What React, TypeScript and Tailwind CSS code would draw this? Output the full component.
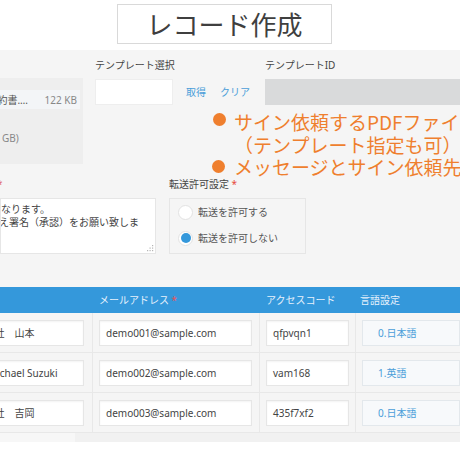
import React from "react";

// ─── Data ───────────────────────────────────────────────────────

const ROWS = [
  { name: "A社　山本", email: "demo001@sample.com", code: "qfpvqn1", lang: "0.日本語" },
  { name: "Michael Suzuki", email: "demo002@sample.com", code: "vam168", lang: "1.英語" },
  { name: "A社　吉岡", email: "demo003@sample.com", code: "435f7xf2", lang: "0.日本語" },
];

const FONT = "font-['Noto_Sans','Noto_Sans_CJK_JP',sans-serif]";

// ─── Pieces ─────────────────────────────────────────────────────

function Input({ className = "", children }: { className?: string; children?: React.ReactNode }) {
  return (
    <div
      className={`h-[26px] bg-white border border-[#e6e6e6] shadow-[inset_0_1px_2px_rgba(0,0,0,0.05)] flex items-center overflow-hidden whitespace-nowrap text-[#444] ${className}`}
    >
      {children}
    </div>
  );
}

function Radio({ checked, label }: { checked?: boolean; label: string }) {
  return (
    <div className="flex items-center h-[26px]">
      <span className="w-[15px] h-[15px] rounded-full bg-white border border-[#e2e2e2] flex items-center justify-center">
        {checked && <span className="w-[10px] h-[10px] rounded-full bg-[#3498db]" />}
      </span>
      <span className="ml-[5px] text-[#555]">{label}</span>
    </div>
  );
}

// ─── App ────────────────────────────────────────────────────────

export default function App() {
  return (
    <div className={`relative w-[460px] h-[460px] overflow-hidden bg-white text-[10px] leading-[14px] ${FONT}`}>
      {/* Title */}
      <div className="h-[50px] pt-[4px] pl-[117px]">
        <div className="w-[215px] h-[40px] border border-[#d9d9d9] flex items-center justify-center text-[26px] text-[#3f3f3f] font-['Noto_Sans_CJK_JP',sans-serif] leading-none">
          レコード作成
        </div>
      </div>

      {/* Form area */}
      <div className="h-[383px] bg-[#f5f5f5] flex flex-col">
        {/* Top row */}
        <div className="flex h-[114px]">
          <div className="mt-[28px] w-[83px] h-[86px] bg-[#eeeeee] flex flex-col">
            <div className="mt-[12px] h-[19px] w-[80px] bg-[#f3f5f7] flex items-center">
              <div className="w-[28px] overflow-hidden flex justify-end whitespace-nowrap text-[#555]">
                契約書.…
              </div>
              <div className="ml-auto mr-[3px] text-[#888]">122 KB</div>
            </div>
            <div className="mt-[22px] pl-[2px] text-[#888]">GB)</div>
          </div>

          <div className="ml-[12px] w-[170px] flex flex-col">
            <div className="mt-[8px] text-[#444]">テンプレート選択</div>
            <div className="mt-[7px] flex items-center">
              <div className="w-[78px] h-[26px] bg-white border border-[#eeeeee]" />
              <span className="ml-[13px] text-[#4a9ed9]">取得</span>
              <span className="ml-[14px] text-[#4a9ed9]">クリア</span>
            </div>
          </div>

          <div className="flex-1 flex flex-col">
            <div className="mt-[8px] text-[#444]">テンプレートID</div>
            <div className="mt-[7px] h-[26px] bg-[#d9dadb]" />
          </div>
        </div>

        {/* Message + transfer row */}
        <div className="flex mt-[13px]">
          <div className="w-[156px] flex flex-col">
            <div className="-ml-[3px] text-[#e06060]">*</div>
            <div className="relative mt-[7px] h-[56px] bg-white border border-[#e6e6e6] overflow-hidden text-[#444] leading-[13px] pt-[4px] whitespace-nowrap">
              <div>なります。</div>
              <div className="-ml-[2px]">え署名（承認）をお願い致しま</div>
              <svg className="absolute right-[1px] bottom-[1px]" width="7" height="7" viewBox="0 0 7 7">
                <g fill="#b5b5b5">
                  <rect x="5" y="0" width="1.2" height="1.2" />
                  <rect x="2.5" y="2.5" width="1.2" height="1.2" />
                  <rect x="5" y="2.5" width="1.2" height="1.2" />
                  <rect x="0" y="5" width="1.2" height="1.2" />
                  <rect x="2.5" y="5" width="1.2" height="1.2" />
                  <rect x="5" y="5" width="1.2" height="1.2" />
                </g>
              </svg>
            </div>
          </div>

          <div className="ml-[13px] w-[137px] flex flex-col">
            <div className="text-[#444]">
              転送許可設定 <span className="text-[#e74c3c]">*</span>
            </div>
            <div className="mt-[7px] h-[56px] border border-[#e6e6e6] pl-[8px] flex flex-col">
              <Radio label="転送を許可する" />
              <Radio checked label="転送を許可しない" />
            </div>
          </div>
        </div>

        {/* Table */}
        <div className="mt-[33px] flex flex-col">
          <div className="h-[26px] bg-[#3498db] flex items-center text-[#e6f1fb]">
            <div className="w-[93px]" />
            <div className="w-[167px] pl-[6px]">
              メールアドレス <span className="text-[#e8555a]">*</span>
            </div>
            <div className="w-[96px] pl-[6px]">アクセスコード</div>
            <div className="flex-1 pl-[4px]">言語設定</div>
          </div>

          {ROWS.map((row) => (
            <div key={row.email} className="h-[40px] flex border-b border-[#e8e8e8]">
              <div className="w-[93px] border-r border-[#e8e8e8] flex items-center overflow-hidden">
                <Input className="-ml-[20px] w-[104px] shrink-0 pl-[7px]">{row.name}</Input>
              </div>
              <div className="w-[167px] border-r border-[#e8e8e8] flex items-center pl-[6px]">
                <Input className="w-[153px] pl-[6px]">{row.email}</Input>
              </div>
              <div className="w-[96px] border-r border-[#e8e8e8] flex items-center pl-[6px]">
                <Input className="w-[83px] pl-[6px]">{row.code}</Input>
              </div>
              <div className="flex-1 flex items-center pl-[6px]">
                <div className="h-[26px] flex-1 bg-[#f7f9fb] border border-[#e3e8ec] flex items-center pl-[15px] text-[#4a9ed9]">
                  {row.lang}
                </div>
              </div>
            </div>
          ))}
          <div className="h-[9px] flex">
            <div className="w-[75px] bg-[#f7f7f7]" />
            <div className="flex-1 bg-[#f1f1f1]" />
          </div>
        </div>
      </div>

      {/* Annotation overlay */}
      <div className="absolute left-[234px] top-[111px] text-[19px] leading-[22.5px] text-[#ef7f2e] whitespace-nowrap font-['Noto_Sans_CJK_JP',sans-serif] [text-spacing-trim:space-all]">
        <div>サイン依頼するPDFファイル</div>
        <div>（テンプレート指定も可）</div>
        <div>メッセージとサイン依頼先</div>
      </div>
      <span className="absolute left-[213px] top-[113px] w-[13px] h-[13px] rounded-full bg-[#ef7f2e]" />
      <span className="absolute left-[212px] top-[160px] w-[13px] h-[13px] rounded-full bg-[#ef7f2e]" />
    </div>
  );
}
